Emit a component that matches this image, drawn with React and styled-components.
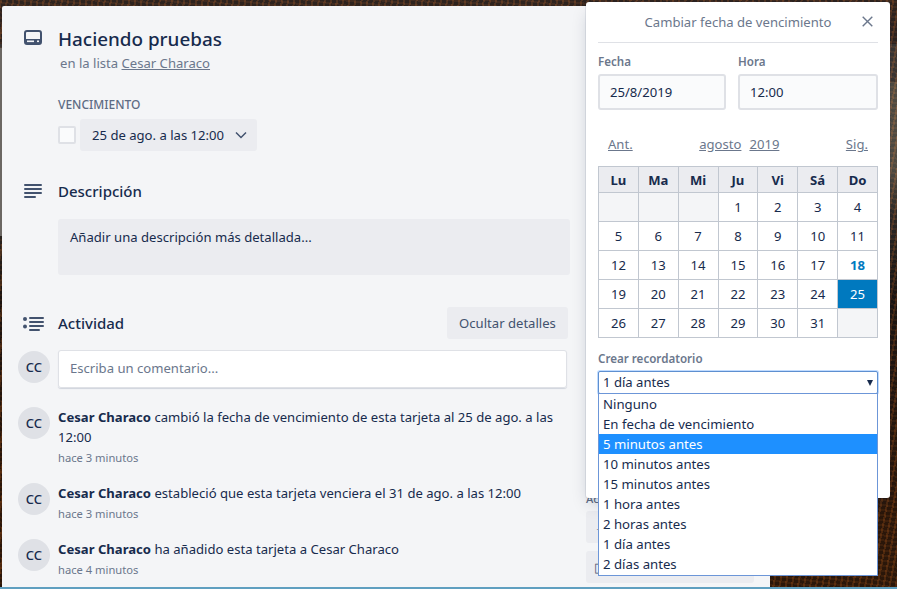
import React from "react";
import styled, { createGlobalStyle } from "styled-components";

const Global = createGlobalStyle`
  html, body { margin: 0; padding: 0; width: 897px; height: 589px; overflow: hidden; }
  body { font-family: "Noto Sans", "Liberation Sans", sans-serif; color: #172b4d; font-size: 13.1px; }
  * { box-sizing: border-box; }
`;

const Page = styled.div`
  position: relative;
  width: 897px;
  height: 589px;
  overflow: hidden;
  padding: 6px 127px 2px 2px;
  background:
    linear-gradient(to bottom, transparent 587px, #5f9fc0 587px),
    linear-gradient(to right, #6b6763 2px, transparent 2px) 0 48px / 100% 188px no-repeat,
    repeating-linear-gradient(101deg, rgba(190,95,25,.2) 0 2px, rgba(10,5,0,.14) 2px 6px),
    repeating-linear-gradient(8deg, rgba(160,80,25,.14) 0 2px, rgba(5,2,0,.12) 2px 5px),
    linear-gradient(to bottom, #3a2d28 0, #3a2d28 44px, #4c4642 44px, #4c4642 82px, #6a6458 82px, #6a6458 170px, #3b3530 215px, #221a16 300px, #351c0c 480px, #351c0c 589px);
`;

const Modal = styled.div`
  display: flex;
  width: 768px;
  height: 581px;
  background: #f4f5f7;
  border-radius: 2px 0 0 0;
  overflow: hidden;
`;

const Main = styled.main`
  width: 584px;
  flex: none;
  padding: 21px 0 0 16px;
  display: flex;
  flex-direction: column;
`;

const Side = styled.aside`
  width: 168px;
  flex: none;
  display: flex;
  flex-direction: column;
  justify-content: flex-end;
  gap: 8px;
  padding-bottom: 4px;
`;

const SideTitle = styled.h3`
  margin: 0 0 -4px;
  font-size: 11.2px;
  line-height: 16px;
  font-weight: 500;
  color: #5e6c84;
`;

const SideButton = styled.div`
  height: 32px;
  padding: 0 8px;
  line-height: 32px;
  background: #ebecf0;
  border-radius: 3px;
  color: #42526e;
`;

const Row = styled.section`
  display: flex;
  align-items: flex-start;
  margin-top: ${(p) => p.$mt ?? 0}px;
`;

const Gutter = styled.div`
  width: 40px;
  flex: none;
  padding-left: ${(p) => p.$pad ?? 6}px;
  padding-top: ${(p) => p.$top ?? 0}px;
  line-height: 0;
`;

const Grow = styled.div`
  flex: 1;
  min-width: 0;
`;

const Title = styled.h1`
  margin: 0;
  font-size: 18.85px;
  line-height: 24px;
  font-weight: 500;
  color: #172b4d;
`;

const Sub = styled.p`
  margin: 2px 0 0 2px;
  line-height: 20px;
  color: #6b778c;
`;

const Link = styled.span`
  text-decoration: underline;
`;

const DueLabel = styled.div`
  margin-top: 24px;
  font-size: 12px;
  line-height: 16px;
  font-weight: 500;
  color: #5e6c84;
  text-transform: uppercase;
`;

const DueRow = styled.div`
  display: flex;
  align-items: center;
  gap: 4px;
  margin-top: 6px;
`;

const Check = styled.span`
  width: 18px;
  height: 18px;
  background: #fafbfc;
  border: 2px solid #dfe1e6;
  border-radius: 2px;
`;

const DueButton = styled.div`
  width: 177px;
  height: 32px;
  background: #ebecf0;
  border-radius: 3px;
  padding: 0 10px 0 12px;
  display: flex;
  align-items: center;
  justify-content: space-between;
  color: #172b4d;
  white-space: nowrap;
`;

const SectionTitle = styled.h2`
  margin: 0;
  font-size: 15px;
  line-height: 20px;
  font-weight: 500;
  color: #172b4d;
`;

const DescBox = styled.div`
  width: 512px;
  height: 56px;
  margin-top: 18px;
  padding: 8px 12px;
  background: #ebecf0;
  border-radius: 3px;
  line-height: 20px;
  color: #172b4d;
`;

const ActivityHead = styled.div`
  display: flex;
  align-items: center;
  justify-content: space-between;
  width: 510px;
`;

const HideButton = styled.div`
  width: 121px;
  height: 32px;
  line-height: 32px;
  text-align: center;
  background: #ebecf0;
  border-radius: 3px;
  color: #42526e;
`;

const Line = styled.div`
  display: flex;
  align-items: flex-start;
  margin-top: ${(p) => p.$mt}px;
`;

const Avatar = styled.span`
  width: 32px;
  height: 32px;
  flex: none;
  margin-right: 8px;
  border-radius: 50%;
  background: #dfe1e6;
  color: #172b4d;
  font-size: 13px;
  font-weight: 500;
  line-height: 32px;
  text-align: center;
`;

const Comment = styled.div`
  width: 509px;
  height: 38px;
  margin-top: -1px;
  padding: 0 12px;
  line-height: 36px;
  background: #fff;
  border-radius: 3px;
  box-shadow: 0 0 0 1px #dfe1e6 inset, 0 1px 1px rgba(9,30,66,.15);
  color: #6b778c;
`;

const EntryBody = styled.div`
  width: 510px;
`;

const EntryText = styled.div`
  line-height: 20px;
  color: #172b4d;
  b { font-weight: 700; }
`;

const When = styled.div`
  margin-top: 1px;
  font-size: 11.2px;
  line-height: 20px;
  color: #6b778c;
`;

const Popover = styled.div`
  position: absolute;
  left: 586px;
  top: 2px;
  width: 304px;
  height: 496px;
  padding: 0 12px;
  background: #fff;
  border-radius: 3px;
  box-shadow: 0 8px 16px -4px rgba(9,30,66,.25), 0 0 0 1px rgba(9,30,66,.08);
`;

const PopHead = styled.div`
  position: relative;
  height: 41px;
  line-height: 41px;
  text-align: center;
  color: #6b778c;
  border-bottom: 1px solid #dfe1e6;
`;

const Close = styled.span`
  position: absolute;
  right: 5px;
  top: 14px;
  line-height: 0;
`;

const Fields = styled.div`
  display: grid;
  grid-template-columns: 128px 140px;
  column-gap: 12px;
  margin-top: 11px;
`;

const FieldLabel = styled.label`
  display: block;
  font-size: 11.6px;
  line-height: 16px;
  font-weight: 600;
  color: #6b778c;
`;

const Input = styled.div`
  height: 36px;
  margin-top: 4px;
  padding: 0 10px;
  line-height: 32px;
  background: #fafbfc;
  border: 2px solid #dfe1e6;
  border-radius: 3px;
  color: #172b4d;
`;

const CalNav = styled.div`
  display: flex;
  justify-content: space-between;
  align-items: center;
  height: 20px;
  margin-top: 24px;
  padding: 0 10px;
  color: #6b778c;
`;

const Month = styled.div`
  display: flex;
  gap: 8px;
`;

const Cal = styled.table`
  width: 280px;
  margin-top: 12px;
  border-collapse: collapse;
  table-layout: fixed;
`;

const Th = styled.th`
  height: 26px;
  padding: 0;
  background: #ebecf0;
  border: 1px solid #c1c7d0;
  font-size: 13.1px;
  font-weight: 700;
  color: #172b4d;
`;

const Td = styled.td`
  height: 29px;
  padding: 0;
  text-align: center;
  border: 1px solid #c1c7d0;
  font-size: 13.1px;
  font-weight: ${(p) => (p.$today ? 700 : 400)};
  color: ${(p) => (p.$sel ? "#fff" : p.$today ? "#0079bf" : "#172b4d")};
  background: ${(p) => (p.$sel ? "#0079bf" : p.$empty ? "#f4f5f7" : "#fff")};
`;

const ReminderLabel = styled(FieldLabel)`
  margin-top: 13px;
`;

const SelectBox = styled.div`
  position: relative;
  height: 23px;
  margin-top: 4px;
  padding: 0 4px;
  line-height: 21px;
  background: #fff;
  border: 1px solid #5e8fd0;
  border-radius: 2px;
  box-shadow: 0 0 0 1px rgba(76,154,255,.35);
  color: #172b4d;
`;

const Caret = styled.span`
  position: absolute;
  right: 4px;
  top: 8px;
  width: 0;
  height: 0;
  border-left: 3px solid transparent;
  border-right: 3px solid transparent;
  border-top: 6px solid #172b4d;
`;

const Dropdown = styled.ul`
  position: absolute;
  left: 598px;
  top: 393px;
  width: 280px;
  height: 183px;
  margin: 0;
  padding: 0;
  list-style: none;
  background: #fff;
  border: 1px solid #6c96d8;
`;

const Option = styled.li`
  height: 20px;
  padding: 0 4px;
  line-height: 20px;
  font-size: 13.2px;
  color: ${(p) => (p.$active ? "#fff" : "#172b4d")};
  background: ${(p) => (p.$active ? "#1e90ff" : "transparent")};
`;

const CardIcon = () => (
  <svg width="18" height="15" viewBox="0 0 18 15">
    <rect x="1" y="1" width="16" height="13" rx="2" fill="none" stroke="#42526e" strokeWidth="2" />
    <rect x="1" y="9" width="16" height="5" fill="#42526e" />
    <rect x="3" y="10.5" width="7" height="1.6" fill="#f4f5f7" />
    <rect x="13" y="10.5" width="2" height="1.6" fill="#f4f5f7" />
  </svg>
);

const DescIcon = () => (
  <svg width="18" height="15" viewBox="0 0 18 15" fill="#42526e">
    <rect x="0" y="0" width="18" height="2" rx="1" />
    <rect x="0" y="4" width="18" height="2" rx="1" />
    <rect x="0" y="8" width="18" height="2" rx="1" />
    <rect x="0" y="12" width="12" height="2" rx="1" />
  </svg>
);

const ActivityIcon = () => (
  <svg width="21" height="15" viewBox="0 0 21 15" fill="#42526e">
    <circle cx="2" cy="3" r="2" />
    <circle cx="2" cy="10.5" r="2" />
    <rect x="6" y="1" width="15" height="2" rx="1" />
    <rect x="6" y="5" width="15" height="2" rx="1" />
    <rect x="6" y="9" width="15" height="2" rx="1" />
    <rect x="6" y="13" width="11" height="2" rx="1" />
  </svg>
);

const Chevron = () => (
  <svg width="12" height="8" viewBox="0 0 12 8" fill="none" stroke="#42526e" strokeWidth="1.5">
    <path d="M1 1.5l5 5 5-5" />
  </svg>
);

const CloseIcon = () => (
  <svg width="11" height="11" viewBox="0 0 11 11" fill="none" stroke="#6b778c" strokeWidth="1.4">
    <path d="M.7.7l9.6 9.6M10.3.7L.7 10.3" />
  </svg>
);

const days = ["Lu", "Ma", "Mi", "Ju", "Vi", "Sá", "Do"];
const weeks = [
  [null, null, null, 1, 2, 3, 4],
  [5, 6, 7, 8, 9, 10, 11],
  [12, 13, 14, 15, 16, 17, 18],
  [19, 20, 21, 22, 23, 24, 25],
  [26, 27, 28, 29, 30, 31, null],
];
const options = [
  "Ninguno",
  "En fecha de vencimiento",
  "5 minutos antes",
  "10 minutos antes",
  "15 minutos antes",
  "1 hora antes",
  "2 horas antes",
  "1 día antes",
  "2 días antes",
];

export default function App() {
  return (
    <>
      <Global />
      <Page>
        <Modal>
          <Main>
            <Row>
              <Gutter $top={3}><CardIcon /></Gutter>
              <Grow>
                <Title>Haciendo pruebas</Title>
                <Sub>en la lista <Link>Cesar Characo</Link></Sub>
                <DueLabel>Vencimiento</DueLabel>
                <DueRow>
                  <Check />
                  <DueButton>25 de ago. a las 12:00 <Chevron /></DueButton>
                </DueRow>
              </Grow>
            </Row>
            <Row $mt={30}>
              <Gutter $top={3}><DescIcon /></Gutter>
              <Grow>
                <SectionTitle>Descripción</SectionTitle>
                <DescBox>Añadir una descripción más detallada...</DescBox>
              </Grow>
            </Row>
            <Row $mt={32}>
              <Gutter $pad={5} $top={9}><ActivityIcon /></Gutter>
              <ActivityHead>
                <SectionTitle>Actividad</SectionTitle>
                <HideButton>Ocultar detalles</HideButton>
              </ActivityHead>
            </Row>
            <Line $mt={12}>
              <Avatar>CC</Avatar>
              <Comment>Escriba un comentario...</Comment>
            </Line>
            <Line $mt={19}>
              <Avatar>CC</Avatar>
              <EntryBody>
                <EntryText><b>Cesar Characo</b> cambió la fecha de vencimiento de esta tarjeta al 25 de ago. a las 12:00</EntryText>
                <When>hace 3 minutos</When>
              </EntryBody>
            </Line>
            <Line $mt={15}>
              <Avatar>CC</Avatar>
              <EntryBody>
                <EntryText><b>Cesar Characo</b> estableció que esta tarjeta venciera el 31 de ago. a las 12:00</EntryText>
                <When>hace 3 minutos</When>
              </EntryBody>
            </Line>
            <Line $mt={15}>
              <Avatar>CC</Avatar>
              <EntryBody>
                <EntryText><b>Cesar Characo</b> ha añadido esta tarjeta a Cesar Characo</EntryText>
                <When>hace 4 minutos</When>
              </EntryBody>
            </Line>
          </Main>
          <Side>
            <SideTitle>Acciones</SideTitle>
            <SideButton>→ Mover</SideButton>
            <SideButton>▯ Copiar</SideButton>
          </Side>
        </Modal>

        <Popover>
          <PopHead>
            Cambiar fecha de vencimiento
            <Close><CloseIcon /></Close>
          </PopHead>
          <Fields>
            <div>
              <FieldLabel>Fecha</FieldLabel>
              <Input>25/8/2019</Input>
            </div>
            <div>
              <FieldLabel>Hora</FieldLabel>
              <Input>12:00</Input>
            </div>
          </Fields>
          <CalNav>
            <Link>Ant.</Link>
            <Month><Link>agosto</Link><Link>2019</Link></Month>
            <Link>Sig.</Link>
          </CalNav>
          <Cal>
            <thead>
              <tr>{days.map((d) => <Th key={d}>{d}</Th>)}</tr>
            </thead>
            <tbody>
              {weeks.map((w, i) => (
                <tr key={i}>
                  {w.map((d, j) => (
                    <Td key={j} $empty={d === null} $today={d === 18} $sel={d === 25}>{d}</Td>
                  ))}
                </tr>
              ))}
            </tbody>
          </Cal>
          <ReminderLabel>Crear recordatorio</ReminderLabel>
          <SelectBox>1 día antes<Caret /></SelectBox>
        </Popover>

        <Dropdown>
          {options.map((o) => (
            <Option key={o} $active={o === "5 minutos antes"}>{o}</Option>
          ))}
        </Dropdown>
      </Page>
    </>
  );
}
